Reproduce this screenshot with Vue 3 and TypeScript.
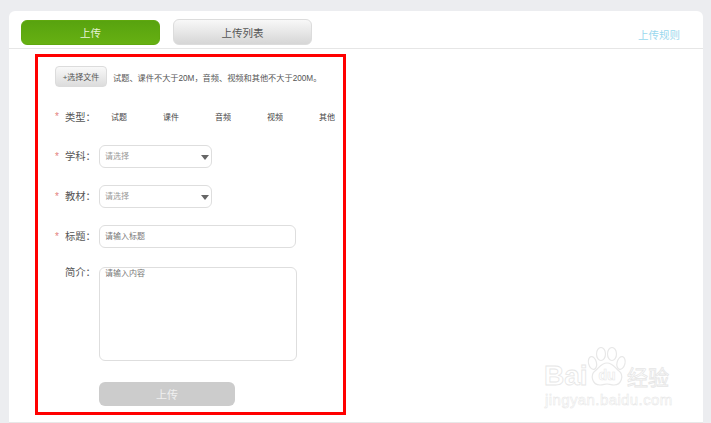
<script setup lang="ts">
const types: string[] = ['试题', '课件', '音频', '视频', '其他']
</script>

<template>
  <div class="page">
    <main class="card">
      <header class="tabs">
        <button class="tab active">上传</button>
        <button class="tab">上传列表</button>
        <a class="rules">上传规则</a>
      </header>
      <form class="form">
        <div class="file-row">
          <button type="button" class="file-btn">+选择文件</button>
          <span class="hint">试题、课件不大于20M，音频、视频和其他不大于200M。</span>
        </div>
        <div class="row type-row">
          <span class="star">*</span><label>类型：</label>
          <div class="types"><span v-for="t in types" :key="t">{{ t }}</span></div>
        </div>
        <div class="row select-row first">
          <span class="star">*</span><label>学科：</label>
          <div class="field select">请选择<i class="caret"></i></div>
        </div>
        <div class="row select-row">
          <span class="star">*</span><label>教材：</label>
          <div class="field select">请选择<i class="caret"></i></div>
        </div>
        <div class="row title-row">
          <span class="star">*</span><label>标题：</label>
          <div class="field input">请输入标题</div>
        </div>
        <div class="row intro-row">
          <span class="star"></span><label>简介：</label>
          <div class="field area">请输入内容</div>
        </div>
        <button type="button" class="submit">上传</button>
      </form>
      <div class="mark">
        <svg class="paw" width="40" height="40" viewBox="0 0 40 40" fill="#fff" stroke="#e8e8e8" stroke-width="1.2">
          <ellipse cx="5.5" cy="16" rx="4" ry="6.5" transform="rotate(-14 5.5 16)" />
          <ellipse cx="14" cy="7" rx="4.5" ry="6.5" />
          <ellipse cx="25" cy="7" rx="4.5" ry="6.5" />
          <ellipse cx="34" cy="16" rx="4" ry="6.5" transform="rotate(14 34 16)" />
          <path d="M20 16c6 0 8 5 12 8 5 4 3 14-5 14-3 0-5-1-7-1s-4 1-7 1c-8 0-10-10-5-14 4-3 6-8 12-8z" />
          <text x="20" y="33" text-anchor="middle" font-family="Liberation Sans" font-weight="700" font-size="14" stroke-width="0.6">du</text>
        </svg>
        <div class="brand"><span class="bai">Bai</span><span class="jy">经验</span></div>
        <div class="url">jingyan.baidu.com</div>
      </div>
    </main>
  </div>
</template>

<style>
html, body { margin: 0; background: #ecedf0; }
</style>

<style scoped>
.page {
  width: 711px; height: 423px; overflow: hidden; box-sizing: border-box;
  padding: 11px 8px 0 9px; background: #ecedf0;
  font-family: "Liberation Sans", "Noto Sans CJK SC", sans-serif;
}
.card {
  position: relative; height: 412px; box-sizing: border-box;
  background: #fff; border-radius: 6px 6px 0 0; border-bottom: 1px solid #e8e8e8;
}
.tabs {
  display: flex; align-items: flex-start; height: 38px; padding: 8px 12px 0;
  box-sizing: border-box; border-bottom: 1px solid #e6e6e6;
}
.tab {
  width: 139px; height: 26px; padding: 0; border: 1px solid #dcdcdc; border-radius: 6px;
  margin-right: 13px; font: 10.5px "Liberation Sans", "Noto Sans CJK SC", sans-serif; color: #555;
  background: linear-gradient(#f8f8f8, #d6d6d6);
}
.tab.active {
  height: 25px; margin-top: 1px; border-color: #5fa80f; color: #e8f4d8;
  background: linear-gradient(#58a30f, #66b012);
}
.rules { margin: 9px 0 0 auto; padding-right: 11px; font-size: 10.5px; line-height: 14px; color: #9ad8ee; }
.form {
  width: 311px; height: 361px; margin: 5px 0 0 26px; box-sizing: border-box;
  border: 3px solid #f00; padding: 9px 0 0 17px; color: #555;
}
.file-row { display: flex; align-items: center; height: 21px; }
.file-btn {
  flex: none; width: 52px; height: 21px; padding: 0; border: 1px solid #dcdcdc; border-radius: 4px;
  font: 8px "Liberation Sans", "Noto Sans CJK SC", sans-serif; color: #555;
  background: linear-gradient(#f9f9f9, #dcdcdc);
}
.hint { margin-left: 6px; font-size: 8.2px; color: #555; white-space: nowrap; }
.row { display: flex; align-items: center; }
.star { flex: none; width: 10px; color: #e4817d; font-size: 10px; line-height: 16px; }
label { flex: none; width: 34px; font-size: 10.3px; line-height: 16px; color: #555; white-space: nowrap; }
.type-row { margin-top: 22px; height: 16px; }
.type-row label { margin-top: 1px; }
.types { display: flex; flex: none; margin-left: 12px; margin-top: -1px; font-size: 8px; color: #444; white-space: nowrap; }
.types span { width: 52px; }
.select-row { margin-top: 17px; }
.select-row.first { margin-top: 20px; }
.select-row.first label { margin-top: 1px; }
.field {
  flex: none; box-sizing: border-box; border: 1px solid #dedede; border-radius: 6px; padding-left: 5px;
  font-size: 8px; color: #999; background: #fff;
}
.select { position: relative; width: 113px; height: 23px; line-height: 22px; }
.caret {
  position: absolute; right: 2px; top: 9px; width: 0; height: 0;
  border-left: 4px solid transparent; border-right: 4px solid transparent; border-top: 5px solid #666;
}
.title-row { margin-top: 17px; }
.input { width: 197px; height: 23px; line-height: 22px; color: #777; }
.intro-row { margin-top: 19px; align-items: flex-start; }
.intro-row label { margin-top: -2px; }
.area { width: 198px; height: 94px; line-height: 10px; padding-top: 1px; color: #777; }
.submit {
  display: block; width: 136px; height: 24px; margin: 21px 0 0 44px; padding: 0;
  border: none; border-radius: 6px; background: #ccc; color: #f0f0f0;
  font: 11px "Liberation Sans", "Noto Sans CJK SC", sans-serif;
}
.mark { position: absolute; left: 535px; top: 335px; width: 150px; height: 70px; }
.paw { position: absolute; left: 43px; top: 1px; }
.brand {
  position: absolute; left: 0; top: 15px; width: 130px; height: 30px; white-space: nowrap;
  color: #fff; -webkit-text-stroke: 0.8px #e6e6e6;
}
.bai { position: absolute; left: 0; top: 0; font: bold 28px/30px "Liberation Sans", sans-serif; }
.jy { position: absolute; left: 83px; top: 0; font: 21px/30px "Noto Sans CJK SC", sans-serif; }
.url {
  position: absolute; left: 1px; top: 45px; white-space: nowrap;
  font: 15px/17px "Liberation Sans", sans-serif; letter-spacing: 0.4px;
  color: #fff; -webkit-text-stroke: 0.5px #e6e6e6;
}
</style>
